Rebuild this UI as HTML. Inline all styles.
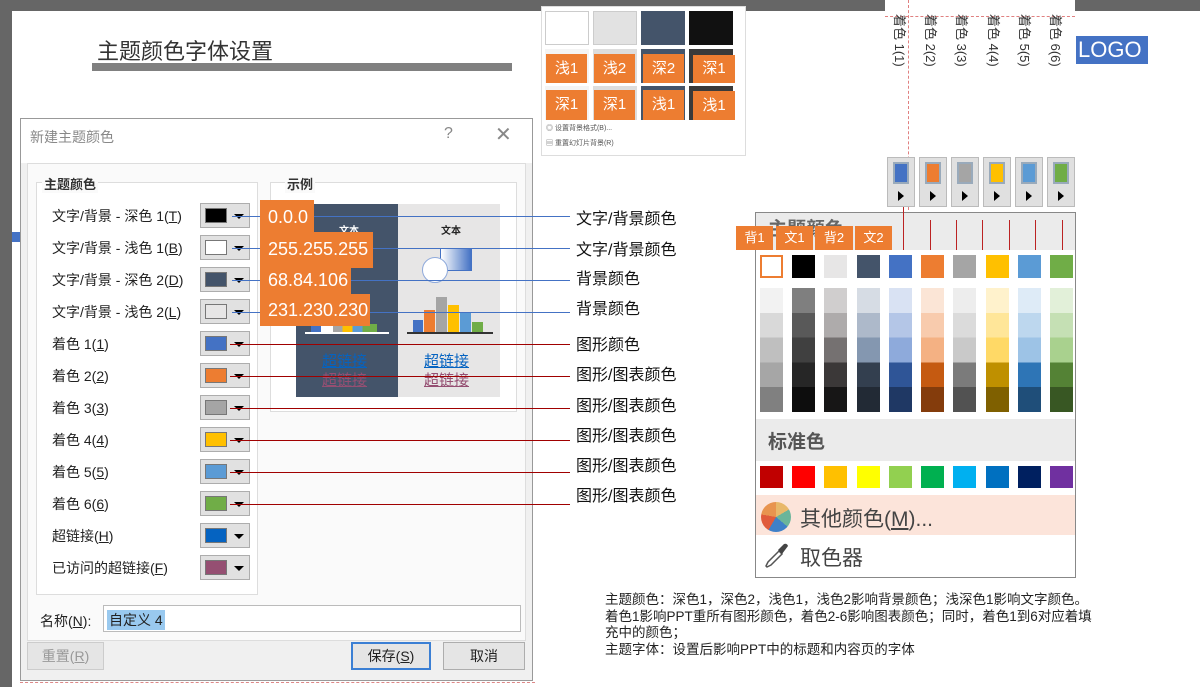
<!DOCTYPE html>
<html><head><meta charset="utf-8"><style>
*{margin:0;padding:0;box-sizing:border-box}
body{width:1200px;height:687px;overflow:hidden;background:#fff;position:relative;font-family:"Liberation Sans","Noto Sans CJK SC",sans-serif;color:#222}
.a{position:absolute}
.lbl{position:absolute;left:52px;font-size:14px;color:#222;line-height:16px}
.sw{position:absolute;left:200px;width:50px;height:25px;background:#e1e1e1;border:1px solid #adadad}
.sw i{position:absolute;left:4px;top:4px;width:22px;height:15px;border:1px solid #777}
.sw b{position:absolute;left:33px;top:10px;width:0;height:0;border-left:5px solid transparent;border-right:5px solid transparent;border-top:5px solid #000}
.og{position:absolute;background:#ed7d31;color:#fff;font-size:18px;line-height:32px;padding-left:8px;white-space:nowrap;overflow:hidden}
.ln{position:absolute;height:1px}
.rt{position:absolute;left:576px;font-size:16px;line-height:18px;color:#111}
.th{position:absolute;background:#ed7d31;color:#fff;font-size:15px;text-align:center;line-height:33px}
.pc{position:absolute;width:23px}
.vt{position:absolute;top:14px;font-size:13px;color:#333;transform:rotate(90deg);transform-origin:left top;white-space:nowrap}
.ab{position:absolute;top:157px;width:28px;height:50px;background:#e0e0e0;border:1px solid #bbb}
.ab i{position:absolute;left:5px;top:4px;width:16px;height:22px;border:2px solid #9ab}
.ab b{position:absolute;left:10px;top:33px;border-top:5px solid transparent;border-bottom:5px solid transparent;border-left:6px solid #000}
</style></head><body>
<div class="a" style="left:0;top:0;width:885px;height:11px;background:#666"></div>
<div class="a" style="left:1075px;top:0;width:125px;height:11px;background:#666"></div>
<div class="a" style="left:0;top:0;width:12px;height:687px;background:#666"></div>
<div class="a" style="left:12px;top:232px;width:8px;height:10px;background:#4472c4"></div>

<div class="a" style="left:97px;top:34px;font-size:22px;color:#333">主题颜色字体设置</div>
<div class="a" style="left:92px;top:63px;width:420px;height:8px;background:#808080"></div>

<div class="a" style="left:20px;top:118px;width:513px;height:563px;background:#f0f0f0;border:1px solid #999"></div>
<div class="a" style="left:21px;top:119px;width:511px;height:44px;background:#fff"></div>
<div class="a" style="left:30px;top:127px;font-size:14px;color:#888">新建主题颜色</div>
<div class="a" style="left:444px;top:125px;font-size:16px;color:#888">?</div>
<div class="a" style="left:495px;top:122px;font-size:20px;color:#888">✕</div>
<div class="a" style="left:27px;top:163px;width:499px;height:478px;background:#fafafa;border:1px solid #ddd"></div>
<div class="a" style="left:36px;top:182px;width:222px;height:413px;border:1px solid #ddd;background:#fff"></div>
<div class="a" style="left:42px;top:174px;font-size:13px;font-weight:bold;color:#333;background:#fafafa;padding:0 2px">主题颜色</div>
<div class="a" style="left:270px;top:182px;width:247px;height:230px;border:1px solid #ddd;background:#fff"></div>
<div class="a" style="left:285px;top:174px;font-size:13px;font-weight:bold;color:#333;background:#fafafa;padding:0 2px">示例</div>

<div class="lbl" style="top:208px">文字/背景 - 深色 1(<u>T</u>)</div>
<div class="lbl" style="top:240px">文字/背景 - 浅色 1(<u>B</u>)</div>
<div class="lbl" style="top:272px">文字/背景 - 深色 2(<u>D</u>)</div>
<div class="lbl" style="top:304px">文字/背景 - 浅色 2(<u>L</u>)</div>
<div class="lbl" style="top:336px">着色 1(<u>1</u>)</div>
<div class="lbl" style="top:368px">着色 2(<u>2</u>)</div>
<div class="lbl" style="top:400px">着色 3(<u>3</u>)</div>
<div class="lbl" style="top:432px">着色 4(<u>4</u>)</div>
<div class="lbl" style="top:464px">着色 5(<u>5</u>)</div>
<div class="lbl" style="top:496px">着色 6(<u>6</u>)</div>
<div class="lbl" style="top:528px">超链接(<u>H</u>)</div>
<div class="lbl" style="top:560px">已访问的超链接(<u>F</u>)</div>

<div class="sw" style="top:203px"><i style="background:#000"></i><b></b></div>
<div class="sw" style="top:235px"><i style="background:#fff"></i><b></b></div>
<div class="sw" style="top:267px"><i style="background:#44546a"></i><b></b></div>
<div class="sw" style="top:299px"><i style="background:#e7e6e6"></i><b></b></div>
<div class="sw" style="top:331px"><i style="background:#4472c4"></i><b></b></div>
<div class="sw" style="top:363px"><i style="background:#ed7d31"></i><b></b></div>
<div class="sw" style="top:395px"><i style="background:#a5a5a5"></i><b></b></div>
<div class="sw" style="top:427px"><i style="background:#ffc000"></i><b></b></div>
<div class="sw" style="top:459px"><i style="background:#5b9bd5"></i><b></b></div>
<div class="sw" style="top:491px"><i style="background:#70ad47"></i><b></b></div>
<div class="sw" style="top:523px"><i style="background:#0563c1"></i><b></b></div>
<div class="sw" style="top:555px"><i style="background:#954f72"></i><b></b></div>

<div class="a" style="left:296px;top:204px;width:102px;height:193px;background:#44546a"></div>
<div class="a" style="left:398px;top:204px;width:102px;height:193px;background:#e7e6e6"></div>
<div class="a" style="left:441px;top:222px;font-size:10px;font-weight:bold">文本</div>
<div class="a" style="left:339px;top:222px;font-size:10px;font-weight:bold;color:#fff">文本</div>
<div class="a" style="left:440px;top:248px;width:32px;height:23px;border:1px solid #4472c4;background:linear-gradient(90deg,#fff,#4472c4)"></div>
<div class="a" style="left:422px;top:257px;width:26px;height:26px;border-radius:50%;border:1px solid #8ea9db;background:#fff"></div>
<div class="a" style="left:407px;top:332px;width:86px;height:2px;background:#333"></div>
<div class="a" style="left:413px;top:320px;width:10px;height:12px;background:#4472c4"></div>
<div class="a" style="left:424px;top:310px;width:11px;height:22px;background:#ed7d31"></div>
<div class="a" style="left:436px;top:297px;width:11px;height:35px;background:#a5a5a5"></div>
<div class="a" style="left:448px;top:305px;width:11px;height:27px;background:#ffc000"></div>
<div class="a" style="left:460px;top:312px;width:11px;height:20px;background:#5b9bd5"></div>
<div class="a" style="left:472px;top:322px;width:11px;height:10px;background:#70ad47"></div>
<div class="a" style="left:305px;top:332px;width:84px;height:2px;background:#fff"></div>
<div class="a" style="left:311px;top:324px;width:66px;height:8px;background:linear-gradient(90deg,#4472c4 15%,#fff 15% 33%,#a5a5a5 33% 48%,#ffc000 48% 63%,#5b9bd5 63% 78%,#70ad47 78%)"></div>
<div class="a" style="left:424px;top:350px;font-size:15px;color:#0563c1;text-decoration:underline">超链接</div>
<div class="a" style="left:424px;top:369px;font-size:15px;color:#954f72;text-decoration:underline">超链接</div>
<div class="a" style="left:322px;top:350px;font-size:15px;color:#0563c1;text-decoration:underline">超链接</div>
<div class="a" style="left:322px;top:369px;font-size:15px;color:#954f72;text-decoration:underline">超链接</div>

<div class="ln" style="left:232px;top:216px;width:338px;background:#4472c4"></div>
<div class="ln" style="left:232px;top:248px;width:338px;background:#4472c4"></div>
<div class="ln" style="left:232px;top:280px;width:338px;background:#4472c4"></div>
<div class="ln" style="left:232px;top:312px;width:338px;background:#4472c4"></div>
<div class="ln" style="left:230px;top:344px;width:340px;background:#a00000"></div>
<div class="ln" style="left:230px;top:376px;width:340px;background:#a00000"></div>
<div class="ln" style="left:230px;top:408px;width:340px;background:#a00000"></div>
<div class="ln" style="left:230px;top:440px;width:340px;background:#a00000"></div>
<div class="ln" style="left:230px;top:472px;width:340px;background:#a00000"></div>
<div class="ln" style="left:230px;top:504px;width:340px;background:#a00000"></div>

<div class="og" style="left:260px;top:200px;width:54px;height:36px;line-height:34px">0.0.0</div>
<div class="og" style="left:260px;top:232px;width:113px;height:36px;line-height:34px">255.255.255</div>
<div class="og" style="left:260px;top:264px;width:91px;height:34px">68.84.106</div>
<div class="og" style="left:260px;top:294px;width:110px;height:32px">231.230.230</div>

<div class="rt" style="top:211px">文字/背景颜色</div>
<div class="rt" style="top:242px">文字/背景颜色</div>
<div class="rt" style="top:271px">背景颜色</div>
<div class="rt" style="top:301px">背景颜色</div>
<div class="rt" style="top:337px">图形颜色</div>
<div class="rt" style="top:367px">图形/图表颜色</div>
<div class="rt" style="top:398px">图形/图表颜色</div>
<div class="rt" style="top:428px">图形/图表颜色</div>
<div class="rt" style="top:458px">图形/图表颜色</div>
<div class="rt" style="top:488px">图形/图表颜色</div>

<div class="a" style="left:40px;top:611px;font-size:14px">名称(<u>N</u>):</div>
<div class="a" style="left:103px;top:605px;width:418px;height:27px;background:#fff;border:1px solid #bbb"></div>
<div class="a" style="left:107px;top:610px;font-size:14px;background:#99c9ef;padding:0 2px">自定义 4</div>
<div class="a" style="left:27px;top:642px;width:77px;height:28px;background:#e5e5e5;border:1px solid #ccc;font-size:14px;color:#999;text-align:center;line-height:26px">重置(<u>R</u>)</div>
<div class="a" style="left:351px;top:642px;width:80px;height:28px;background:#e5e5e5;border:2px solid #3b7fd4;font-size:14px;text-align:center;line-height:24px">保存(<u>S</u>)</div>
<div class="a" style="left:443px;top:642px;width:82px;height:28px;background:#e5e5e5;border:1px solid #adadad;font-size:14px;text-align:center;line-height:26px">取消</div>
<div class="a" style="left:20px;top:682px;width:515px;border-top:1px dashed #d88"></div>

<div class="a" style="left:541px;top:6px;width:205px;height:150px;border:1px solid #ddd;background:#fff"></div>
<div class="a" style="left:545px;top:11px;width:44px;height:34px;background:#fff;border:1px solid #ccc"></div>
<div class="a" style="left:593px;top:11px;width:44px;height:34px;background:#e2e2e2;border:1px solid #ccc"></div>
<div class="a" style="left:641px;top:11px;width:44px;height:34px;background:#44546a"></div>
<div class="a" style="left:689px;top:11px;width:44px;height:34px;background:#111"></div>
<div class="a" style="left:545px;top:49px;width:44px;height:34px;background:#f4f4f4"></div>
<div class="a" style="left:593px;top:49px;width:44px;height:34px;background:#ddd"></div>
<div class="a" style="left:641px;top:49px;width:44px;height:34px;background:#44546a"></div>
<div class="a" style="left:689px;top:49px;width:44px;height:34px;background:#3a3a3a"></div>
<div class="a" style="left:545px;top:86px;width:44px;height:34px;background:#f4f4f4"></div>
<div class="a" style="left:593px;top:86px;width:44px;height:34px;background:#ddd"></div>
<div class="a" style="left:641px;top:86px;width:44px;height:34px;background:#44546a"></div>
<div class="a" style="left:689px;top:86px;width:44px;height:34px;background:#3a3a3a"></div>
<div class="th" style="left:546px;top:54px;width:41px;height:29px;line-height:29px">浅1</div>
<div class="th" style="left:594px;top:54px;width:41px;height:29px;line-height:29px">浅2</div>
<div class="th" style="left:643px;top:54px;width:41px;height:29px;line-height:29px">深2</div>
<div class="th" style="left:693px;top:55px;width:42px;height:28px;line-height:28px">深1</div>
<div class="th" style="left:546px;top:90px;width:41px;height:30px;line-height:30px">深1</div>
<div class="th" style="left:594px;top:90px;width:41px;height:30px;line-height:30px">深1</div>
<div class="th" style="left:643px;top:90px;width:41px;height:30px;line-height:30px">浅1</div>
<div class="th" style="left:693px;top:91px;width:42px;height:29px;line-height:29px">浅1</div>
<div class="a" style="left:546px;top:123px;font-size:7px;color:#555">◎ 设置背景格式(B)...</div>
<div class="a" style="left:546px;top:138px;font-size:7px;color:#555">▤ 重置幻灯片背景(R)</div>

<div class="a" style="left:885px;top:0;width:190px;height:215px;background:#fff"></div>
<div class="a" style="left:885px;top:16px;width:190px;border-top:1px dashed #e08080"></div>
<div class="a" style="left:908px;top:0;height:215px;border-left:1px dashed #e08080"></div>
<div class="vt" style="left:910px">着色 1(1)</div>
<div class="vt" style="left:941px">着色 2(2)</div>
<div class="vt" style="left:972px">着色 3(3)</div>
<div class="vt" style="left:1004px">着色 4(4)</div>
<div class="vt" style="left:1035px">着色 5(5)</div>
<div class="vt" style="left:1066px">着色 6(6)</div>
<div class="a" style="left:1076px;top:36px;width:72px;height:28px;background:#4472c4;color:#fff;font-size:22px;line-height:28px;padding-left:2px">LOGO</div>

<div class="ab" style="left:887px"><i style="background:#4472c4"></i><b></b></div>
<div class="ab" style="left:919px"><i style="background:#ed7d31"></i><b></b></div>
<div class="ab" style="left:951px"><i style="background:#a5a5a5"></i><b></b></div>
<div class="ab" style="left:983px"><i style="background:#ffc000"></i><b></b></div>
<div class="ab" style="left:1015px"><i style="background:#5b9bd5"></i><b></b></div>
<div class="ab" style="left:1047px"><i style="background:#70ad47"></i><b></b></div>

<div class="a" style="left:755px;top:212px;width:321px;height:366px;background:#fff;border:1px solid #888"></div>
<div class="a" style="left:756px;top:213px;width:319px;height:37px;background:#ebebeb"></div>
<div class="a" style="left:768px;top:214px;font-size:19px;font-weight:bold;color:#666">主题颜色</div>
<div class="th" style="left:736px;top:226px;width:37px;height:24px;line-height:24px;font-size:13px">背1</div>
<div class="th" style="left:776px;top:226px;width:37px;height:24px;line-height:24px;font-size:13px">文1</div>
<div class="th" style="left:815px;top:226px;width:38px;height:24px;line-height:24px;font-size:13px">背2</div>
<div class="th" style="left:855px;top:226px;width:37px;height:24px;line-height:24px;font-size:13px">文2</div>
<div class="a" style="left:903px;top:207px;width:1px;height:43px;background:#b22"></div>
<div class="a" style="left:930px;top:220px;width:1px;height:30px;background:#b22"></div>
<div class="a" style="left:956px;top:220px;width:1px;height:30px;background:#b22"></div>
<div class="a" style="left:982px;top:220px;width:1px;height:30px;background:#b22"></div>
<div class="a" style="left:1009px;top:220px;width:1px;height:30px;background:#b22"></div>
<div class="a" style="left:1035px;top:220px;width:1px;height:30px;background:#b22"></div>
<div class="a" style="left:1062px;top:220px;width:1px;height:30px;background:#b22"></div>

<div class="pc" style="left:760px;top:255px;height:23px;background:#fff;border:2px solid #ed7d31"></div>
<div class="pc" style="left:792px;top:255px;height:23px;background:#000"></div>
<div class="pc" style="left:824px;top:255px;height:23px;background:#e7e6e6"></div>
<div class="pc" style="left:857px;top:255px;height:23px;background:#44546a"></div>
<div class="pc" style="left:889px;top:255px;height:23px;background:#4472c4"></div>
<div class="pc" style="left:921px;top:255px;height:23px;background:#ed7d31"></div>
<div class="pc" style="left:953px;top:255px;height:23px;background:#a5a5a5"></div>
<div class="pc" style="left:986px;top:255px;height:23px;background:#ffc000"></div>
<div class="pc" style="left:1018px;top:255px;height:23px;background:#5b9bd5"></div>
<div class="pc" style="left:1050px;top:255px;height:23px;background:#70ad47"></div>

<div class="pc" style="left:760px;top:288px;height:124px;background:linear-gradient(#f2f2f2 20%,#d9d9d9 20% 40%,#bfbfbf 40% 60%,#a6a6a6 60% 80%,#808080 80%)"></div>
<div class="pc" style="left:792px;top:288px;height:124px;background:linear-gradient(#7f7f7f 20%,#595959 20% 40%,#404040 40% 60%,#262626 60% 80%,#0d0d0d 80%)"></div>
<div class="pc" style="left:824px;top:288px;height:124px;background:linear-gradient(#d0cece 20%,#aeabab 20% 40%,#757171 40% 60%,#3b3838 60% 80%,#171616 80%)"></div>
<div class="pc" style="left:857px;top:288px;height:124px;background:linear-gradient(#d6dce4 20%,#adb9ca 20% 40%,#8497b0 40% 60%,#333f4f 60% 80%,#222a35 80%)"></div>
<div class="pc" style="left:889px;top:288px;height:124px;background:linear-gradient(#d9e2f3 20%,#b4c6e7 20% 40%,#8eaadb 40% 60%,#2f5597 60% 80%,#1f3864 80%)"></div>
<div class="pc" style="left:921px;top:288px;height:124px;background:linear-gradient(#fbe5d6 20%,#f8cbad 20% 40%,#f4b183 40% 60%,#c55a11 60% 80%,#843c0c 80%)"></div>
<div class="pc" style="left:953px;top:288px;height:124px;background:linear-gradient(#ededed 20%,#dbdbdb 20% 40%,#c9c9c9 40% 60%,#7b7b7b 60% 80%,#525252 80%)"></div>
<div class="pc" style="left:986px;top:288px;height:124px;background:linear-gradient(#fff2cc 20%,#ffe699 20% 40%,#ffd966 40% 60%,#bf9000 60% 80%,#7f6000 80%)"></div>
<div class="pc" style="left:1018px;top:288px;height:124px;background:linear-gradient(#deebf7 20%,#bdd7ee 20% 40%,#9dc3e6 40% 60%,#2e75b6 60% 80%,#1f4e79 80%)"></div>
<div class="pc" style="left:1050px;top:288px;height:124px;background:linear-gradient(#e2f0d9 20%,#c5e0b4 20% 40%,#a9d18e 40% 60%,#548235 60% 80%,#385723 80%)"></div>

<div class="a" style="left:756px;top:419px;width:319px;height:42px;background:#ebebeb"></div>
<div class="a" style="left:768px;top:427px;font-size:19px;font-weight:bold;color:#555">标准色</div>
<div class="pc" style="left:760px;top:466px;height:22px;background:#c00000"></div>
<div class="pc" style="left:792px;top:466px;height:22px;background:#ff0000"></div>
<div class="pc" style="left:824px;top:466px;height:22px;background:#ffc000"></div>
<div class="pc" style="left:857px;top:466px;height:22px;background:#ffff00"></div>
<div class="pc" style="left:889px;top:466px;height:22px;background:#92d050"></div>
<div class="pc" style="left:921px;top:466px;height:22px;background:#00b050"></div>
<div class="pc" style="left:953px;top:466px;height:22px;background:#00b0f0"></div>
<div class="pc" style="left:986px;top:466px;height:22px;background:#0070c0"></div>
<div class="pc" style="left:1018px;top:466px;height:22px;background:#002060"></div>
<div class="pc" style="left:1050px;top:466px;height:22px;background:#7030a0"></div>

<div class="a" style="left:756px;top:495px;width:319px;height:40px;background:#fce4da"></div>
<div class="a" style="left:761px;top:502px;width:30px;height:30px;border-radius:50%;background:conic-gradient(#e8b86a 0 60deg,#6bb59a 60deg 130deg,#3f80c8 130deg 210deg,#e05b3c 210deg 280deg,#e8944f 280deg)"></div>
<div class="a" style="left:800px;top:503px;font-size:21px;color:#444">其他颜色(<u>M</u>)...</div>
<svg class="a" style="left:762px;top:540px" width="30" height="30" viewBox="0 0 30 30"><path d="M4 26 L6 22 L17 11 L20 14 L9 25 L5 27 Z" fill="none" stroke="#555" stroke-width="1.5"/><path d="M16 10 L22 4 Q25 3 26 6 L20 14 Z" fill="#444"/></svg>
<div class="a" style="left:800px;top:542px;font-size:21px;color:#444">取色器</div>

<div class="a" style="left:605px;top:592px;font-size:13.5px;line-height:16.5px;color:#222;width:560px">主题颜色：深色1，深色2，浅色1，浅色2影响背景颜色；浅深色1影响文字颜色。<br>着色1影响PPT重所有图形颜色，着色2-6影响图表颜色；同时，着色1到6对应着填<br>充中的颜色；<br>主题字体：设置后影响PPT中的标题和内容页的字体</div>
</body></html>
